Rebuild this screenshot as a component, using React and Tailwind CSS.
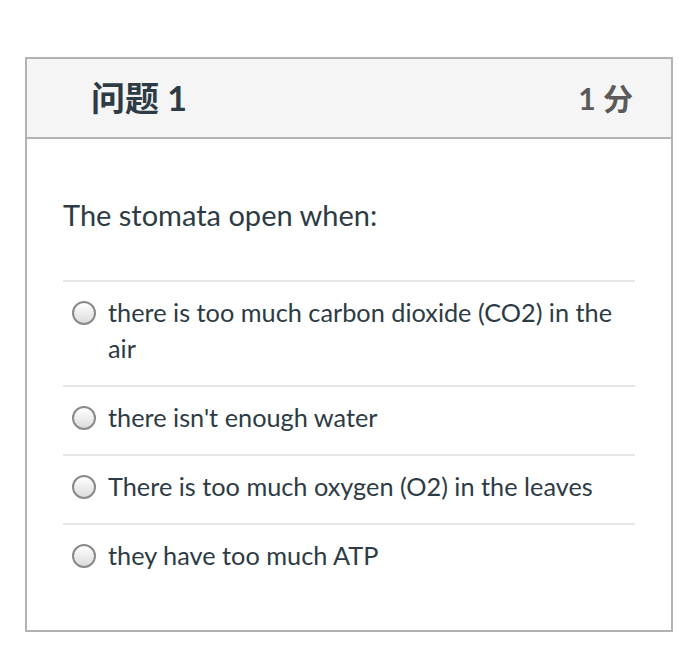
import React from "react";

const options = [
  "there is too much carbon dioxide (CO2) in the air",
  "there isn't enough water",
  "There is too much oxygen (O2) in the leaves",
  "they have too much ATP",
];

const Radio = () => (
  <span className="mt-[7px] inline-block h-[24px] w-[24px] shrink-0 rounded-full border-2 border-[#8a8a8a] bg-gradient-to-b from-white to-[#dcdcdc]" />
);

export default function App() {
  return (
    <div
      className="min-h-[653px] bg-white pt-[57px] pl-[25px] pr-[27px] text-[#2d3b45]"
      style={{ fontFamily: "Lato, 'Noto Sans CJK SC', sans-serif" }}
    >
      <div className="border-2 border-[#b3b3b3]">
        <div className="flex h-[80px] items-center justify-between border-b-2 border-[#b3b3b3] bg-[#f5f5f5] pl-[64px] pr-[38px]">
          <h2 className="text-[34px] font-bold leading-none">问题 1</h2>
          <span className="text-[30px] font-bold leading-none text-[#5a5a5a]">1 分</span>
        </div>
        <div className="px-[36px] pb-[38px] pt-[58px]">
          <p className="text-[29px] leading-[36px]">The stomata open when:</p>
          <div className="mt-[47px] border-t-2 border-[#e4e6e8]">
            {options.map((o, i) => (
              <div
                key={i}
                className={`flex gap-[12px] pl-[9px] pr-[18px] pt-[12px] pb-[19px] ${i < options.length - 1 ? "border-b-2 border-[#e4e6e8]" : ""}`}
              >
                <Radio />
                <span className="text-[25.3px] leading-[36px]">{o}</span>
              </div>
            ))}
          </div>
        </div>
      </div>
    </div>
  );
}
